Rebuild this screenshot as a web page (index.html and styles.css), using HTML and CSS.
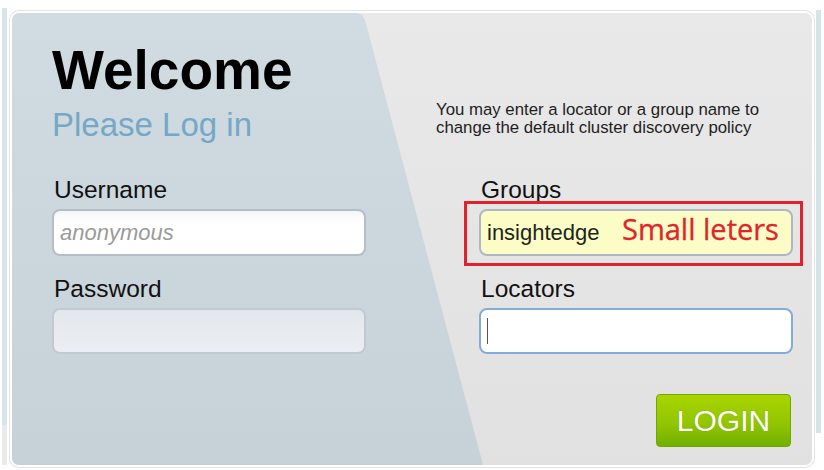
FILE: index.html
```html
<!DOCTYPE html>
<html lang="en">
<head>
<meta charset="utf-8">
<title>Login</title>
<link rel="stylesheet" href="styles.css">
</head>
<body>
<div class="panel">
  <div class="col left">
    <h1 class="title">Welcome</h1>
    <p class="subtitle">Please Log in</p>
    <div class="field first">
      <label class="label" for="user">Username</label>
      <input class="input user" id="user" type="text" placeholder="anonymous">
    </div>
    <div class="field">
      <label class="label" for="pass">Password</label>
      <input class="input pass" id="pass" type="password">
    </div>
  </div>
  <div class="col right">
    <p class="info">You may enter a locator or a group name to<br>change the default cluster discovery policy</p>
    <div class="field first">
      <label class="label" for="groups">Groups</label>
      <div class="annot">
        <input class="input groups" id="groups" type="text" value="insightedge">
        <span class="note">Small leters</span>
      </div>
    </div>
    <div class="field">
      <label class="label" for="loc">Locators</label>
      <div class="caretwrap">
        <input class="input loc" id="loc" type="text">
        <span class="caret"></span>
      </div>
    </div>
    <button class="login" type="button">LOGIN</button>
  </div>
</div>
</body>
</html>
```

FILE: styles.css
```css
html, body {
  margin: 0;
  padding: 0;
}
body {
  width: 824px;
  height: 470px;
  overflow: hidden;
  font-family: "Liberation Sans", Arial, sans-serif;
  background:
    linear-gradient(#d6e6eb, #d6e6eb) 2px 8px / 5px 417px no-repeat,
    linear-gradient(#e8eaec, #e8eaec) 2px 425px / 5px 40px no-repeat,
    linear-gradient(#d4e5ea, #d4e5ea) 816px 10px / 5px 423px no-repeat,
    #ffffff;
  padding-top: 13px;
  padding-left: 12px;
  box-sizing: border-box;
}

.panel {
  position: relative;
  width: 800px;
  height: 452px;
  box-sizing: border-box;
  border-radius: 7px;
  background: linear-gradient(#e9e9e9, #e1e1e1);
  box-shadow: 0 0 0 2px #ffffff, 0 0 0 3px #e2e2e2;
  display: flex;
  gap: 113px;
  padding-left: 40px;
  overflow: hidden;
}
.panel::before {
  content: "";
  position: absolute;
  inset: 0;
  background: linear-gradient(#d1dbe2, #c6d1d8);
  clip-path: polygon(0 0, 345px 0, 350px 2px, 353px 7px, 471px 452px, 0 452px);
  z-index: 0;
}

.col {
  position: relative;
  z-index: 1;
  width: 314px;
  display: flex;
  flex-direction: column;
}
.left { padding-top: 30px; }
.right { padding-top: 88px; }

.title {
  margin: 0;
  font-size: 55px;
  line-height: 54px;
  font-weight: bold;
  color: #000000;
}
.subtitle {
  margin: 11px 0 0;
  font-size: 33px;
  line-height: 33px;
  color: #74a8c6;
}
.info {
  margin: 0 0 0 -43px;
  font-size: 16.8px;
  line-height: 18px;
  color: #1e1e1e;
  white-space: nowrap;
}

.field {
  display: flex;
  flex-direction: column;
  margin-top: 21px;
}
.left .field.first { margin-top: 37px; }
.right .field.first { margin-top: 41px; }

.label {
  font-size: 24.5px;
  line-height: 24px;
  color: #111111;
  margin-bottom: 7px;
  padding-left: 2px;
}

.input {
  display: block;
  width: 314px;
  height: 47px;
  box-sizing: border-box;
  margin: 0;
  padding: 0 6px;
  border: 2px solid #b7bdc8;
  border-radius: 8px;
  font-family: "Liberation Sans", Arial, sans-serif;
  font-size: 22px;
  color: #1c261c;
  outline: none;
}
.user {
  background: linear-gradient(#f4f6f8, #ffffff 30%);
}
.user::placeholder {
  color: #9a9a9a;
  font-style: italic;
}
.pass {
  height: 46px;
  background: linear-gradient(#e3e8ed, #ebeef2);
  border-color: #c3c9d3;
}
.groups {
  background: #fcfdc6;
  border-color: #b2b6c2;
}
.loc {
  height: 46px;
  background: #ffffff;
  border-color: #85acd8;
}

.annot {
  position: relative;
}
.annot::before {
  content: "";
  position: absolute;
  top: -8px;
  left: -15px;
  right: -10px;
  bottom: -10px;
  border: 3px solid #e1222b;
  pointer-events: none;
}
.note {
  position: absolute;
  top: 5px;
  left: 143px;
  font-family: "Open Sans", sans-serif;
  font-size: 29px;
  line-height: 29px;
  color: #e2232c;
  white-space: nowrap;
  -webkit-text-stroke: 0.3px #e2232c;
}

.caretwrap {
  position: relative;
}
.caret {
  position: absolute;
  left: 8px;
  top: 10px;
  width: 1px;
  height: 26px;
  background: #555555;
}

.login {
  align-self: flex-end;
  margin-top: 40px;
  margin-right: 2px;
  width: 135px;
  height: 53px;
  border: 1px solid #6ea800;
  border-radius: 4px;
  background: linear-gradient(#a9d500, #93c600 55%, #72af00);
  color: #ffffff;
  font-family: "Liberation Sans", Arial, sans-serif;
  font-size: 30px;
  line-height: 30px;
  padding: 0;
  text-shadow: 0 0 1px rgba(60, 100, 0, 0.4);
  cursor: pointer;
}
```
